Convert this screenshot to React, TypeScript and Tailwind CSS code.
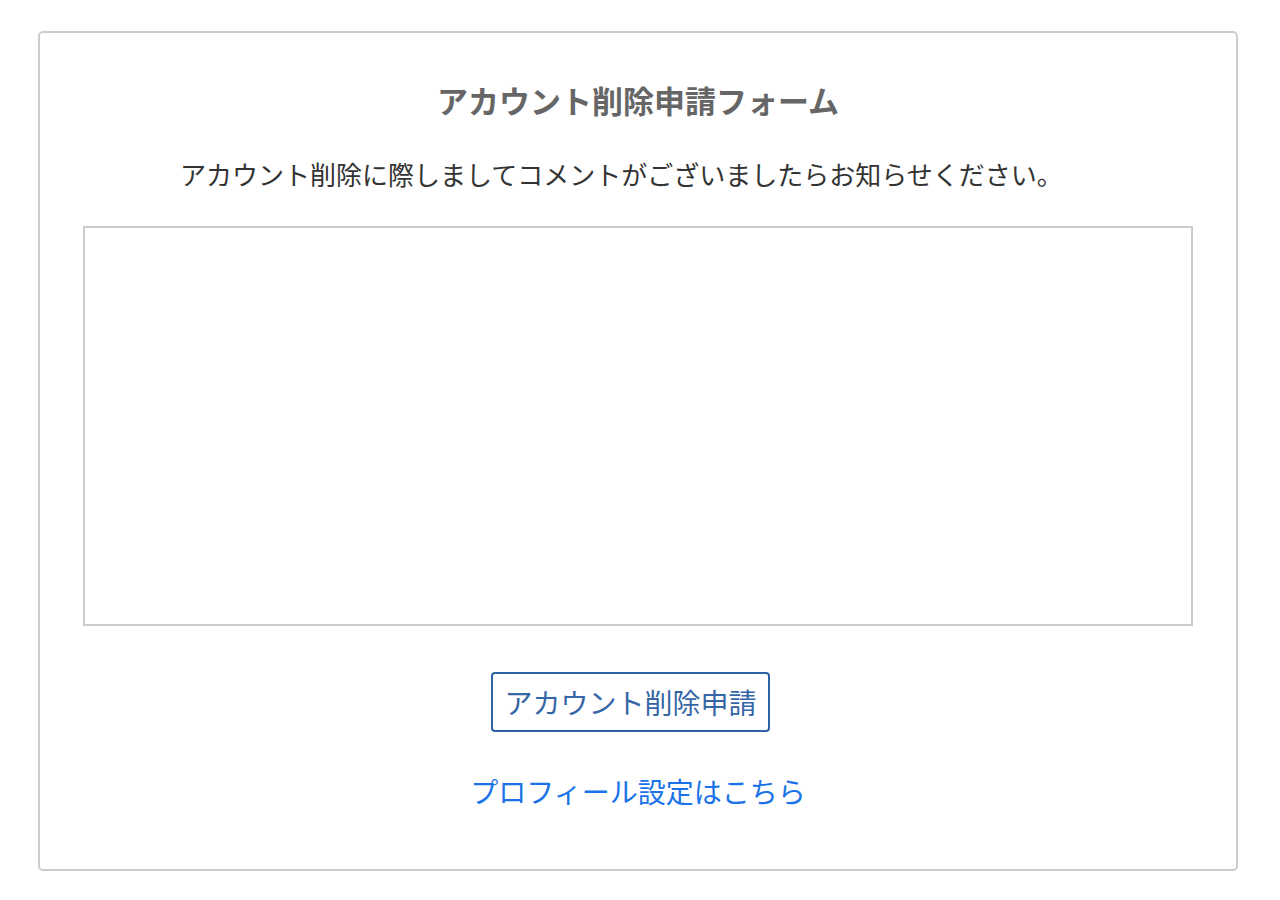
export default function App() {
  return (
    <div
      className="min-h-[900px] bg-white px-[38px] pt-[31px]"
      style={{ fontFamily: '"Noto Sans CJK JP", "Noto Sans", sans-serif' }}
    >
      <div className="flex w-[1200px] flex-col items-center rounded-[5px] border-2 border-[#cccccc] pb-[58px] pt-[43px]">
        <h1 className="text-[31px] font-bold leading-[48px] text-[#666666]">
          アカウント削除申請フォーム
        </h1>
        <p className="mt-[32px] self-start pl-[140px] text-[26px] leading-[36px] text-[#333333]">
          アカウント削除に際しましてコメントがございましたらお知らせください。
        </p>
        <textarea className="mt-[34px] h-[400px] w-[1110px] resize-none border-2 border-[#cccccc] outline-none" />
        <button
          type="button"
          className="mr-[15px] mt-[46px] rounded-[4px] border-2 border-[#2d62a3] px-[11px] py-[8px] text-[28px] leading-[40px] text-[#3566a6]"
        >
          アカウント削除申請
        </button>
        <a href="#" className="mt-[39px] text-[28px] leading-[40px] text-[#1a73e8]">
          プロフィール設定はこちら
        </a>
      </div>
    </div>
  );
}
